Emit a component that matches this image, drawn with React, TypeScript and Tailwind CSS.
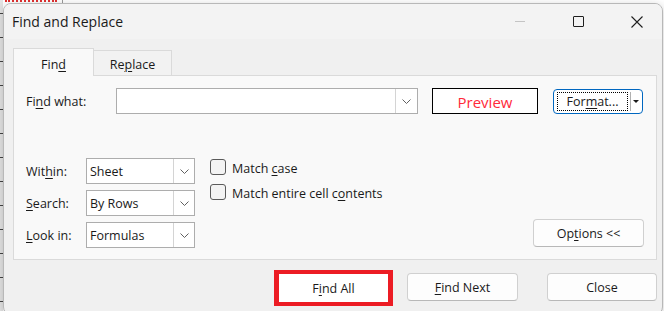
import React from 'react';

// Small chevron used by combo boxes
const Chevron = () => (
    <svg width="9" height="5" viewBox="0 0 9 5" aria-hidden="true">
        <path d="M0.5 0.5 L4.5 4.5 L8.5 0.5" fill="none" stroke="#606060" strokeWidth="1" />
    </svg>
);

const U: React.FC<{ children: React.ReactNode }> = ({ children }) => (
    <span className="underline decoration-1 underline-offset-[2px]">{children}</span>
);

interface SelectProps {
    value: string;
}

const Select: React.FC<SelectProps> = ({ value }) => (
    <div className="flex h-[26px] w-[109px] border border-[#adadad] bg-white">
        <div className="flex flex-1 items-center pl-[3px] pt-[2px] text-[12.5px] text-[#1a1a1a]">{value}</div>
        <div className="flex w-[21px] items-center justify-center border-l border-[#d4d4d4] bg-white">
            <Chevron />
        </div>
    </div>
);

const Checkbox: React.FC<{ children: React.ReactNode }> = ({ children }) => (
    <div className="flex h-[16px] items-center gap-[6px]">
        <div className="h-[16px] w-[16px] shrink-0 rounded-[3px] border border-[#5a5a5a] bg-[#f3f3f3]" />
        <span className="pt-[3px] text-[12.5px] leading-[16px] text-[#1a1a1a]">{children}</span>
    </div>
);

const Button: React.FC<{ children: React.ReactNode; className?: string }> = ({ children, className = '' }) => (
    <div
        className={`flex h-[28px] items-center justify-center rounded-[4px] border border-[#d0d0d0] border-b-[#b8b8b8] bg-[#fdfdfd] pt-[3px] text-[12.5px] text-[#1a1a1a] ${className}`}
    >
        {children}
    </div>
);

const App: React.FC = () => {
    const ticks = Array.from({ length: 13 });

    return (
        <div className="relative h-[311px] w-[664px] overflow-hidden bg-white font-['Open_Sans',sans-serif]">
            {/* Spreadsheet behind the dialog */}
            <div className="absolute left-0 top-0 flex h-full w-[3px] flex-col gap-[23px] bg-[#e4e4e4] pt-[13px]">
                {ticks.map((_, i) => (
                    <div key={i} className="h-px w-[3px] bg-[#444]" />
                ))}
            </div>
            <div className="absolute left-[5px] top-0 h-[2px] w-[52px] border-b-2 border-dotted border-[#e03030]" />
            <div className="absolute left-[62px] top-0 h-[3px] w-px bg-[#9a9a9a]" />

            {/* Dialog window */}
            <div className="absolute left-[3px] top-[3px] flex h-[312px] w-[660px] flex-col overflow-hidden rounded-[8px] border border-[#b8b8b8] bg-[#f0f0f0] shadow-[0_2px_10px_rgba(0,0,0,0.2)]">
                {/* Title bar */}
                <div className="flex h-[35px] shrink-0 items-center bg-[#f3f3f3]">
                    <div className="flex-1 pl-[8px] text-[14px] text-[#1a1a1a]">Find and Replace</div>
                    <div className="-mr-[4px] flex h-full">
                        <div className="flex h-full w-[58px] items-center justify-center">
                            <div className="h-px w-[10px] bg-[#c4c4c4]" />
                        </div>
                        <div className="flex h-full w-[59px] items-center justify-center">
                            <div className="h-[11px] w-[11px] rounded-[1px] border border-[#1f1f1f]" />
                        </div>
                        <div className="flex h-full w-[58px] items-center justify-center">
                            <svg width="12" height="12" viewBox="0 0 12 12" aria-hidden="true">
                                <path d="M0.5 0.5 L11.5 11.5 M11.5 0.5 L0.5 11.5" stroke="#1f1f1f" strokeWidth="1.1" />
                            </svg>
                        </div>
                    </div>
                </div>

                {/* Body */}
                <div className="flex flex-1 flex-col pl-[9px] pr-[5px] pt-[9px]">
                    {/* Tabs */}
                    <div className="-mb-px flex items-end">
                        <div className="relative z-10 flex h-[28px] w-[81px] items-center justify-center border border-b-0 border-[#dadada] bg-[#f9f9f9] pt-[5px] text-[12.5px] text-[#1a1a1a]">
                            Fin<U>d</U>
                        </div>
                        <div className="mb-px flex h-[25px] w-[78px] items-center justify-center border border-b-0 border-l-0 border-[#dadada] bg-[#f2f2f2] pt-[4px] text-[12.5px] text-[#1a1a1a]">
                            Re<U>p</U>lace
                        </div>
                    </div>

                    {/* Panel */}
                    <div className="flex h-[185px] w-[644px] flex-col border border-[#dadada] bg-[#f9f9f9] px-[12px] pt-[12px]">
                        {/* Find what row */}
                        <div className="flex h-[26px] items-center">
                            <div className="w-[90px] pt-[2px] text-[12.5px] text-[#1a1a1a]">
                                Fi<U>n</U>d what:
                            </div>
                            <div className="flex h-[26px] w-[302px] border border-[#adadad] bg-white">
                                <div className="flex-1" />
                                <div className="flex w-[22px] items-center justify-center border-l border-[#d4d4d4]">
                                    <Chevron />
                                </div>
                            </div>
                            <div className="ml-[14px] flex h-[26px] w-[106px] items-center justify-center border border-black bg-white pt-[2px] text-[15px] text-[#ff2a3a]">
                                Preview
                            </div>
                            <div className="ml-[15px] flex h-[25px] w-[90px] items-center rounded-[4px] border border-[#0067c0] bg-white pl-[3px] pr-[2px]">
                                <div className="flex h-[19px] flex-1 items-center justify-center border border-dotted border-black pt-[2px] text-[12.5px] text-[#1a1a1a]">
                                    For<U>m</U>at...
                                </div>
                                <div className="ml-[2px] h-[19px] w-px bg-[#b0b0b0]" />
                                <div className="flex w-[9px] items-center justify-center">
                                    <svg width="6" height="3" viewBox="0 0 6 3" aria-hidden="true">
                                        <path d="M0 0 L6 0 L3 3 Z" fill="#1a1a1a" />
                                    </svg>
                                </div>
                            </div>
                        </div>

                        {/* Options section */}
                        <div className="mt-[44px] flex items-end">
                            <div className="flex flex-col gap-[6px]">
                                <div className="flex items-center">
                                    <div className="w-[60px] pt-[2px] text-[12.5px] text-[#1a1a1a]">
                                        Wit<U>h</U>in:
                                    </div>
                                    <Select value="Sheet" />
                                </div>
                                <div className="flex items-center">
                                    <div className="w-[60px] pt-[2px] text-[12.5px] text-[#1a1a1a]">
                                        <U>S</U>earch:
                                    </div>
                                    <Select value="By Rows" />
                                </div>
                                <div className="flex items-center">
                                    <div className="w-[60px] pt-[2px] text-[12.5px] text-[#1a1a1a]">
                                        <U>L</U>ook in:
                                    </div>
                                    <Select value="Formulas" />
                                </div>
                            </div>
                            <div className="ml-[15px] flex flex-col gap-[9px] self-start pt-[1px]">
                                <Checkbox>
                                    Match <U>c</U>ase
                                </Checkbox>
                                <Checkbox>
                                    Match entire cell c<U>o</U>ntents
                                </Checkbox>
                            </div>
                            <div className="flex-1" />
                            <Button className="mb-px w-[111px]">
                                Op<U>t</U>ions &lt;&lt;
                            </Button>
                        </div>
                    </div>

                    {/* Bottom buttons */}
                    <div className="mt-[10px] flex w-[644px] items-start justify-end">
                        <div className="flex h-[36px] w-[119px] items-center justify-center border-x-[5px] border-y-4 border-[#ec1c24] bg-white pt-[3px] text-[12.5px] text-[#1a1a1a]">
                            F<U>i</U>nd All
                        </div>
                        <Button className="ml-[14px] mt-[3px] w-[111px]">
                            <U>F</U>ind Next
                        </Button>
                        <Button className="ml-[29px] mt-[3px] w-[110px]">Close</Button>
                    </div>
                </div>
            </div>
        </div>
    );
};

export default App;
